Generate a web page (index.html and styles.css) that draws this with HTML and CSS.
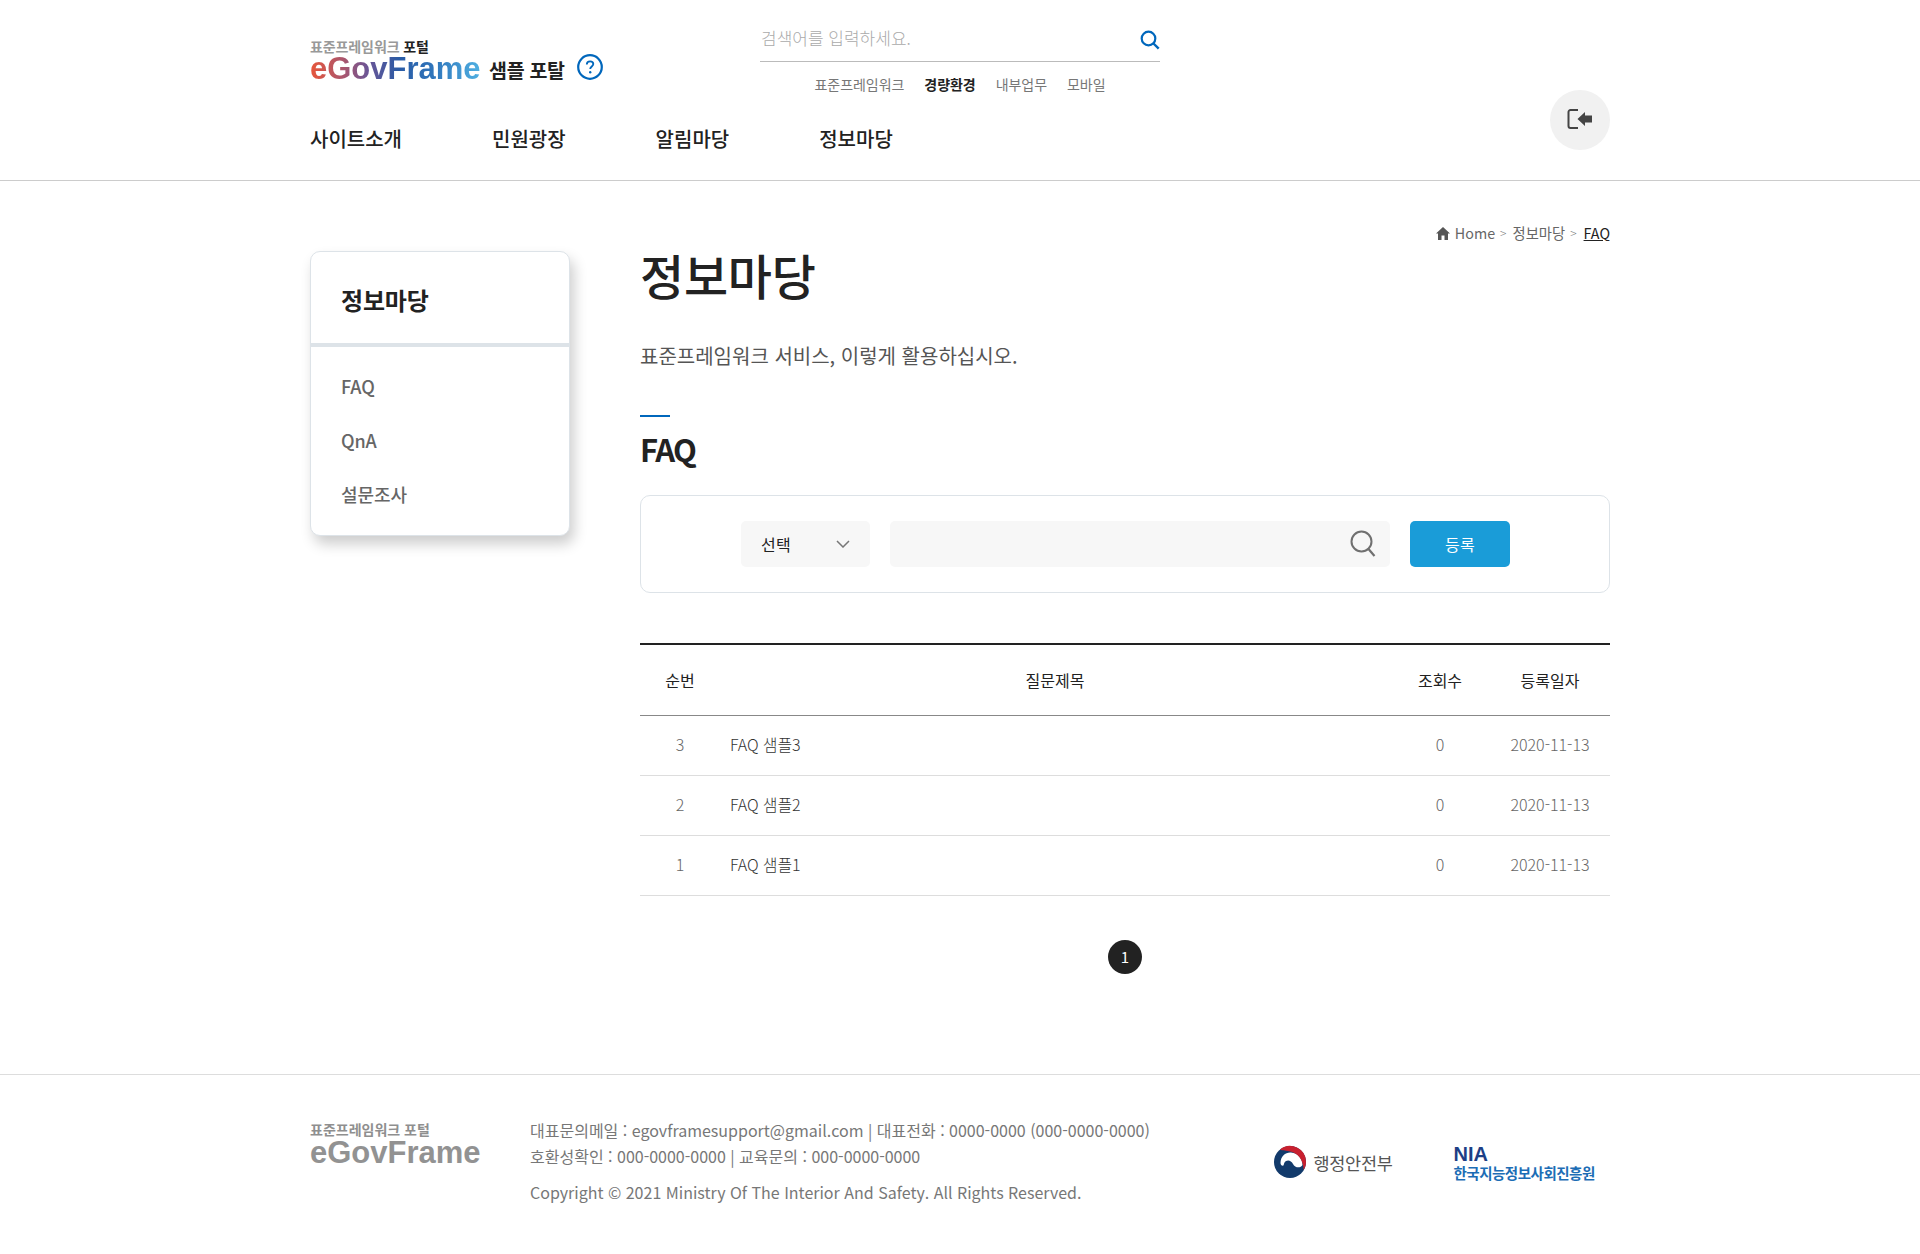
FILE: index.html
```html
<!DOCTYPE html>
<html lang="ko">
<head>
<meta charset="utf-8">
<title>FAQ</title>
<link rel="stylesheet" href="styles.css">
</head>
<body>
<header class="site-header">
  <div class="header-inner">
    <div class="logo">
      <div class="logo-mark">
        <div class="logo-sub">표준프레임워크 <b>포털</b></div>
        <div class="logo-name">eGovFrame</div>
      </div>
      <span class="logo-tail">샘플 포탈</span>
      <svg class="help-icon" width="26" height="26" viewBox="0 0 26 26" aria-hidden="true"><circle cx="13" cy="13" r="11.800" fill="none" stroke="#0067bc" stroke-width="2.200"/><path d="M9.800 10.400c0-1.900 1.400-3.100 3.300-3.100s3.200 1.100 3.200 2.800c0 2.400-3.100 2.500-3.100 5" fill="none" stroke="#0067bc" stroke-width="1.800"/><circle cx="13.200" cy="18.200" r="1.200" fill="#0067bc"/></svg>
    </div>
    <div class="search-area">
      <div class="top-search">
        <span class="top-search-text">검색어를 입력하세요.</span>
        <svg class="top-search-icon" width="20" height="20" viewBox="0 0 20 20" aria-hidden="true"><circle cx="8.500" cy="8.500" r="6.800" fill="none" stroke="#0067bc" stroke-width="2.200"/><path d="M13.500 13.500l5.200 5.200" stroke="#0067bc" stroke-width="2.400"/></svg>
      </div>
      <ul class="util-links">
        <li>표준프레임워크</li>
        <li class="active">경량환경</li>
        <li>내부업무</li>
        <li>모바일</li>
      </ul>
    </div>
    <nav class="gnb">
      <a>사이트소개</a><a>민원광장</a><a>알림마당</a><a>정보마당</a>
    </nav>
    <button class="logout" aria-label="로그인">
      <svg width="26" height="20" viewBox="0 0 26 20" aria-hidden="true"><path d="M11 1H3.500A2 2 0 0 0 1.500 3v14a2 2 0 0 0 2 2H11" fill="none" stroke="#444" stroke-width="2"/><path d="M10.500 10l7.500-7v3.500h7v7h-7V17z" fill="#444"/></svg>
    </button>
  </div>
</header>

<div class="page">
  <aside class="side">
    <h2 class="side-title">정보마당</h2>
    <ul class="side-menu">
      <li>FAQ</li>
      <li>QnA</li>
      <li>설문조사</li>
    </ul>
  </aside>
  <main class="content">
    <div class="crumbs">
      <svg width="14" height="13" viewBox="0 0 14 13" aria-hidden="true"><path d="M7 0L0 6.500h2V13h3.500V8.500h3V13H12V6.500h2z" fill="#555"/></svg>
      <span>Home</span><i>&gt;</i><span>정보마당</span><i>&gt;</i><a>FAQ</a>
    </div>
    <h1 class="title">정보마당</h1>
    <p class="lead">표준프레임워크 서비스, 이렇게 활용하십시오.</p>
    <h2 class="section-title">FAQ</h2>
    <div class="search-box">
      <div class="select">
        <span>선택</span>
        <svg width="14" height="8" viewBox="0 0 14 8" aria-hidden="true"><path d="M1 1l6 6 6-6" fill="none" stroke="#777" stroke-width="1.500"/></svg>
      </div>
      <div class="keyword">
        <svg width="26" height="28" viewBox="0 0 26 28" aria-hidden="true"><circle cx="11.500" cy="11.500" r="10" fill="none" stroke="#707070" stroke-width="2"/><path d="M18.500 19l6 7" stroke="#707070" stroke-width="2.200"/></svg>
      </div>
      <a class="btn">등록</a>
    </div>
    <table class="board">
      <thead>
        <tr><th class="c-no">순번</th><th>질문제목</th><th class="c-hit">조회수</th><th class="c-date">등록일자</th></tr>
      </thead>
      <tbody>
        <tr><td>3</td><td class="subject">FAQ 샘플3</td><td>0</td><td>2020-11-13</td></tr>
        <tr><td>2</td><td class="subject">FAQ 샘플2</td><td>0</td><td>2020-11-13</td></tr>
        <tr><td>1</td><td class="subject">FAQ 샘플1</td><td>0</td><td>2020-11-13</td></tr>
      </tbody>
    </table>
    <div class="pager"><span class="page-on">1</span></div>
  </main>
</div>

<footer class="site-footer">
  <div class="footer-inner">
    <div class="foot-logo">
      <div class="foot-sub">표준프레임워크 포털</div>
      <div class="foot-name">eGovFrame</div>
    </div>
    <div class="foot-info">
      <p>대표문의메일 : egovframesupport@gmail.com | 대표전화 : 0000-0000 (000-0000-0000)</p>
      <p>호환성확인 : 000-0000-0000 | 교육문의 : 000-0000-0000</p>
      <p class="copy">Copyright © 2021 Ministry Of The Interior And Safety. All Rights Reserved.</p>
    </div>
    <div class="partners">
      <div class="mois">
        <svg width="34" height="34" viewBox="0 0 34 34" aria-hidden="true"><circle cx="17" cy="17" r="16" fill="#123a6b"/><path d="M7.500 18C7.500 11 13 7 18 7.500C25 8 29.500 14 29.500 20C27.500 23.500 22 23 20 19C18.500 16 15.500 14.500 13 16C11 17.200 11 19.500 10.500 20.500C9 21 7.500 20 7.500 18z" fill="#fff"/><path d="M7 4.500A16 16 0 0 1 33 17C33 20 32 23 30.500 25C31 16 25 7 15 6C12 5.700 9 6 7 4.500z" fill="#c8202f"/></svg>
        <span>행정안전부</span>
      </div>
      <div class="nia">
        <div class="nia-en">NIA</div>
        <div class="nia-ko">한국지능정보사회진흥원</div>
      </div>
    </div>
  </div>
</footer>
</body>
</html>
```
FILE: styles.css
```css
* { box-sizing: border-box; }
html, body { margin: 0; padding: 0; }
body {
  font-family: "Noto Sans CJK KR", "Noto Sans", sans-serif;
  color: #222;
  background: #fff;
}
ul { list-style: none; margin: 0; padding: 0; }
h1, h2, p { margin: 0; }

.site-header { height: 181px; border-bottom: 1px solid #ccc; }
.header-inner {
  width: 1300px;
  margin: 0 auto;
  height: 180px;
  display: grid;
  grid-template-columns: 450px 400px 1fr;
  grid-template-rows: 90px 90px;
}
.logo { display: flex; align-items: flex-start; padding-top: 38px; }
.logo-mark { width: 180px; }
.logo-sub { font-size: 14px; line-height: 16px; color: #999; font-weight: 700; letter-spacing: -0.1px; }
.logo-sub b { color: #222; font-weight: 700; }
.logo-name {
  width: 171px;
  font-family: "Liberation Sans", Arial, sans-serif;
  font-weight: 700;
  font-size: 31px;
  line-height: 30px;
  margin-top: 0;
  background: linear-gradient(90deg, #e8563a 0%, #a8566f 20%, #6a5596 34%, #2a5ba5 52%, #2f75bb 72%, #4fb0e2 100%);
  -webkit-background-clip: text;
  background-clip: text;
  color: transparent;
}
.logo-tail { font-size: 19.500px; font-weight: 700; line-height: 26px; margin: 19px 0 0 -1px; color: #222; letter-spacing: -0.3px; }
.help-icon { margin: 16px 0 0 12px; }

.search-area { grid-column: 2; }
.top-search {
  margin-top: 20px;
  height: 42px;
  border-bottom: 1px solid #bbb;
  display: flex;
  justify-content: space-between;
  align-items: center;
}
.top-search-text { font-size: 17px; color: #aaa; padding-left: 1px; font-weight: 300; margin-bottom: 7px; }
.top-search-icon { margin-bottom: 2px; }
.util-links {
  display: flex;
  justify-content: center;
  gap: 20px;
  margin-top: 12px;
  font-size: 14px;
  line-height: 20px;
  color: #777;
  letter-spacing: -0.05px;
}
.util-links .active { color: #222; font-weight: 700; }

.gnb {
  grid-column: 1 / 3;
  grid-row: 2;
  display: flex;
  gap: 90px;
  padding-top: 34px;
  font-size: 20px;
  line-height: 30px;
  font-weight: 500;
  color: #222;
}
.logout {
  grid-column: 3;
  grid-row: 1 / 3;
  justify-self: end;
  margin-top: 90px;
  width: 60px;
  height: 60px;
  border: 0;
  border-radius: 50%;
  background: #f1f1f1;
  display: flex;
  align-items: center;
  justify-content: center;
  padding: 0 0 3px;
}

.page {
  width: 1300px;
  margin: 0 auto;
  display: flex;
  gap: 70px;
  align-items: flex-start;
  height: 893px;
}
.side {
  width: 260px;
  margin-top: 70px;
  height: 285px;
  border: 1px solid #dde3e8;
  border-radius: 10px;
  background: #fff;
  box-shadow: 4px 8px 14px rgba(0, 0, 0, 0.2);
}
.side-title {
  height: 95px;
  border-bottom: 4px solid #dde3e8;
  padding: 31px 0 0 30px;
  font-size: 24px;
  line-height: 34px;
  font-weight: 700;
  letter-spacing: -0.2px;
}
.side-menu { padding: 24px 0 0 30px; font-size: 18px; line-height: 30px; color: #666; }
.side-menu li { height: 54px; font-weight: 500; letter-spacing: -0.1px; }

.content { width: 970px; position: relative; }
.crumbs {
  display: flex;
  justify-content: flex-end;
  align-items: center;
  gap: 5px;
  height: 20px;
  margin-top: 42px;
  font-size: 14.300px;
  line-height: 20px;
  color: #666;
}
.crumbs i { font-style: normal; font-weight: 300; font-size: 12px; margin: 0 1px 0 0; color: #777; }
.crumbs a { color: #222; text-decoration: underline; margin-left: 1px; }
.title {
  font-size: 48px;
  line-height: 70px;
  font-weight: 500;
  margin-top: -4px;
  letter-spacing: -0.25px;
}
.lead { font-size: 20px; line-height: 30px; color: #555; margin-top: 32px; }
.section-title {
  position: relative;
  margin-top: 44px;
  padding-top: 12px;
  font-size: 31px;
  line-height: 44px;
  font-weight: 700;
  letter-spacing: -1.6px;
}
.section-title::before {
  content: "";
  position: absolute;
  left: 0;
  top: 0;
  width: 30px;
  height: 2px;
  background: #0067bc;
}
.search-box {
  margin-top: 24px;
  height: 98px;
  border: 1px solid #dde3e8;
  border-radius: 10px;
  display: flex;
  align-items: center;
  justify-content: center;
  gap: 20px;
}
.select {
  width: 129px;
  margin-left: 1px;
  height: 46px;
  background: #f7f7f7;
  border-radius: 5px;
  padding: 0 20px;
  display: flex;
  align-items: center;
  justify-content: space-between;
  font-size: 16px;
  letter-spacing: 0.3px;
}
.keyword {
  width: 500px;
  height: 46px;
  background: #f7f7f7;
  border-radius: 5px;
  display: flex;
  align-items: center;
  justify-content: flex-end;
  padding: 0 14px 0 0;
}
.btn {
  width: 100px;
  height: 46px;
  background: #1a9cd8;
  color: #fff;
  border-radius: 5px;
  display: flex;
  align-items: center;
  justify-content: center;
  font-size: 16px;
  letter-spacing: 0.3px;
}
.board {
  width: 970px;
  margin-top: 50px;
  border-collapse: collapse;
  table-layout: fixed;
  border-top: 2px solid #222;
}
.board th {
  height: 71px;
  font-size: 16px;
  font-weight: 400;
  color: #222;
  border-bottom: 1px solid #888;
}
.c-no { width: 80px; }
.c-hit { width: 100px; }
.c-date { width: 120px; }
.board td {
  height: 60px;
  text-align: center;
  font-size: 16px;
  font-weight: 300;
  color: #666;
  border-bottom: 1px solid #ddd;
  padding: 0 0 2px;
}
.board td.subject { text-align: left; padding-left: 10px; color: #333; letter-spacing: -0.1px; }
.pager { display: flex; justify-content: center; margin-top: 44px; }
.page-on {
  width: 34px;
  height: 34px;
  border-radius: 50%;
  background: #222;
  color: #fff;
  font-size: 15px;
  display: flex;
  align-items: center;
  justify-content: center;
}

.site-footer { border-top: 1px solid #ddd; height: 180px; }
.footer-inner {
  width: 1300px;
  margin: 0 auto;
  display: flex;
  padding-top: 46px;
}
.foot-logo { width: 220px; }
.foot-sub { font-size: 14px; line-height: 16px; font-weight: 700; color: #8f8f8f; letter-spacing: 0; }
.foot-name {
  font-family: "Liberation Sans", Arial, sans-serif;
  font-weight: 700;
  font-size: 31px;
  line-height: 28px;
  color: #929292;
  margin-top: 2px;
}
.foot-info { width: 750px; font-size: 16px; line-height: 26px; color: #777; margin-top: -4px; }
.foot-info .copy { margin-top: 10px; }
.partners { display: flex; align-items: flex-start; }
.mois { display: flex; align-items: center; gap: 7px; font-size: 17.500px; font-weight: 400; color: #555; margin-top: 24px; margin-left: -7.500px; width: 181px; letter-spacing: -0.3px; }
.nia { margin-top: 24px; width: 150px; }
.nia-en { font-family: "Liberation Sans", Arial, sans-serif; font-weight: 700; font-size: 20px; line-height: 18px; color: #1d3f86; }
.nia-ko { font-size: 14.500px; line-height: 19px; font-weight: 700; color: #1c6db5; letter-spacing: -0.5px; }
```
